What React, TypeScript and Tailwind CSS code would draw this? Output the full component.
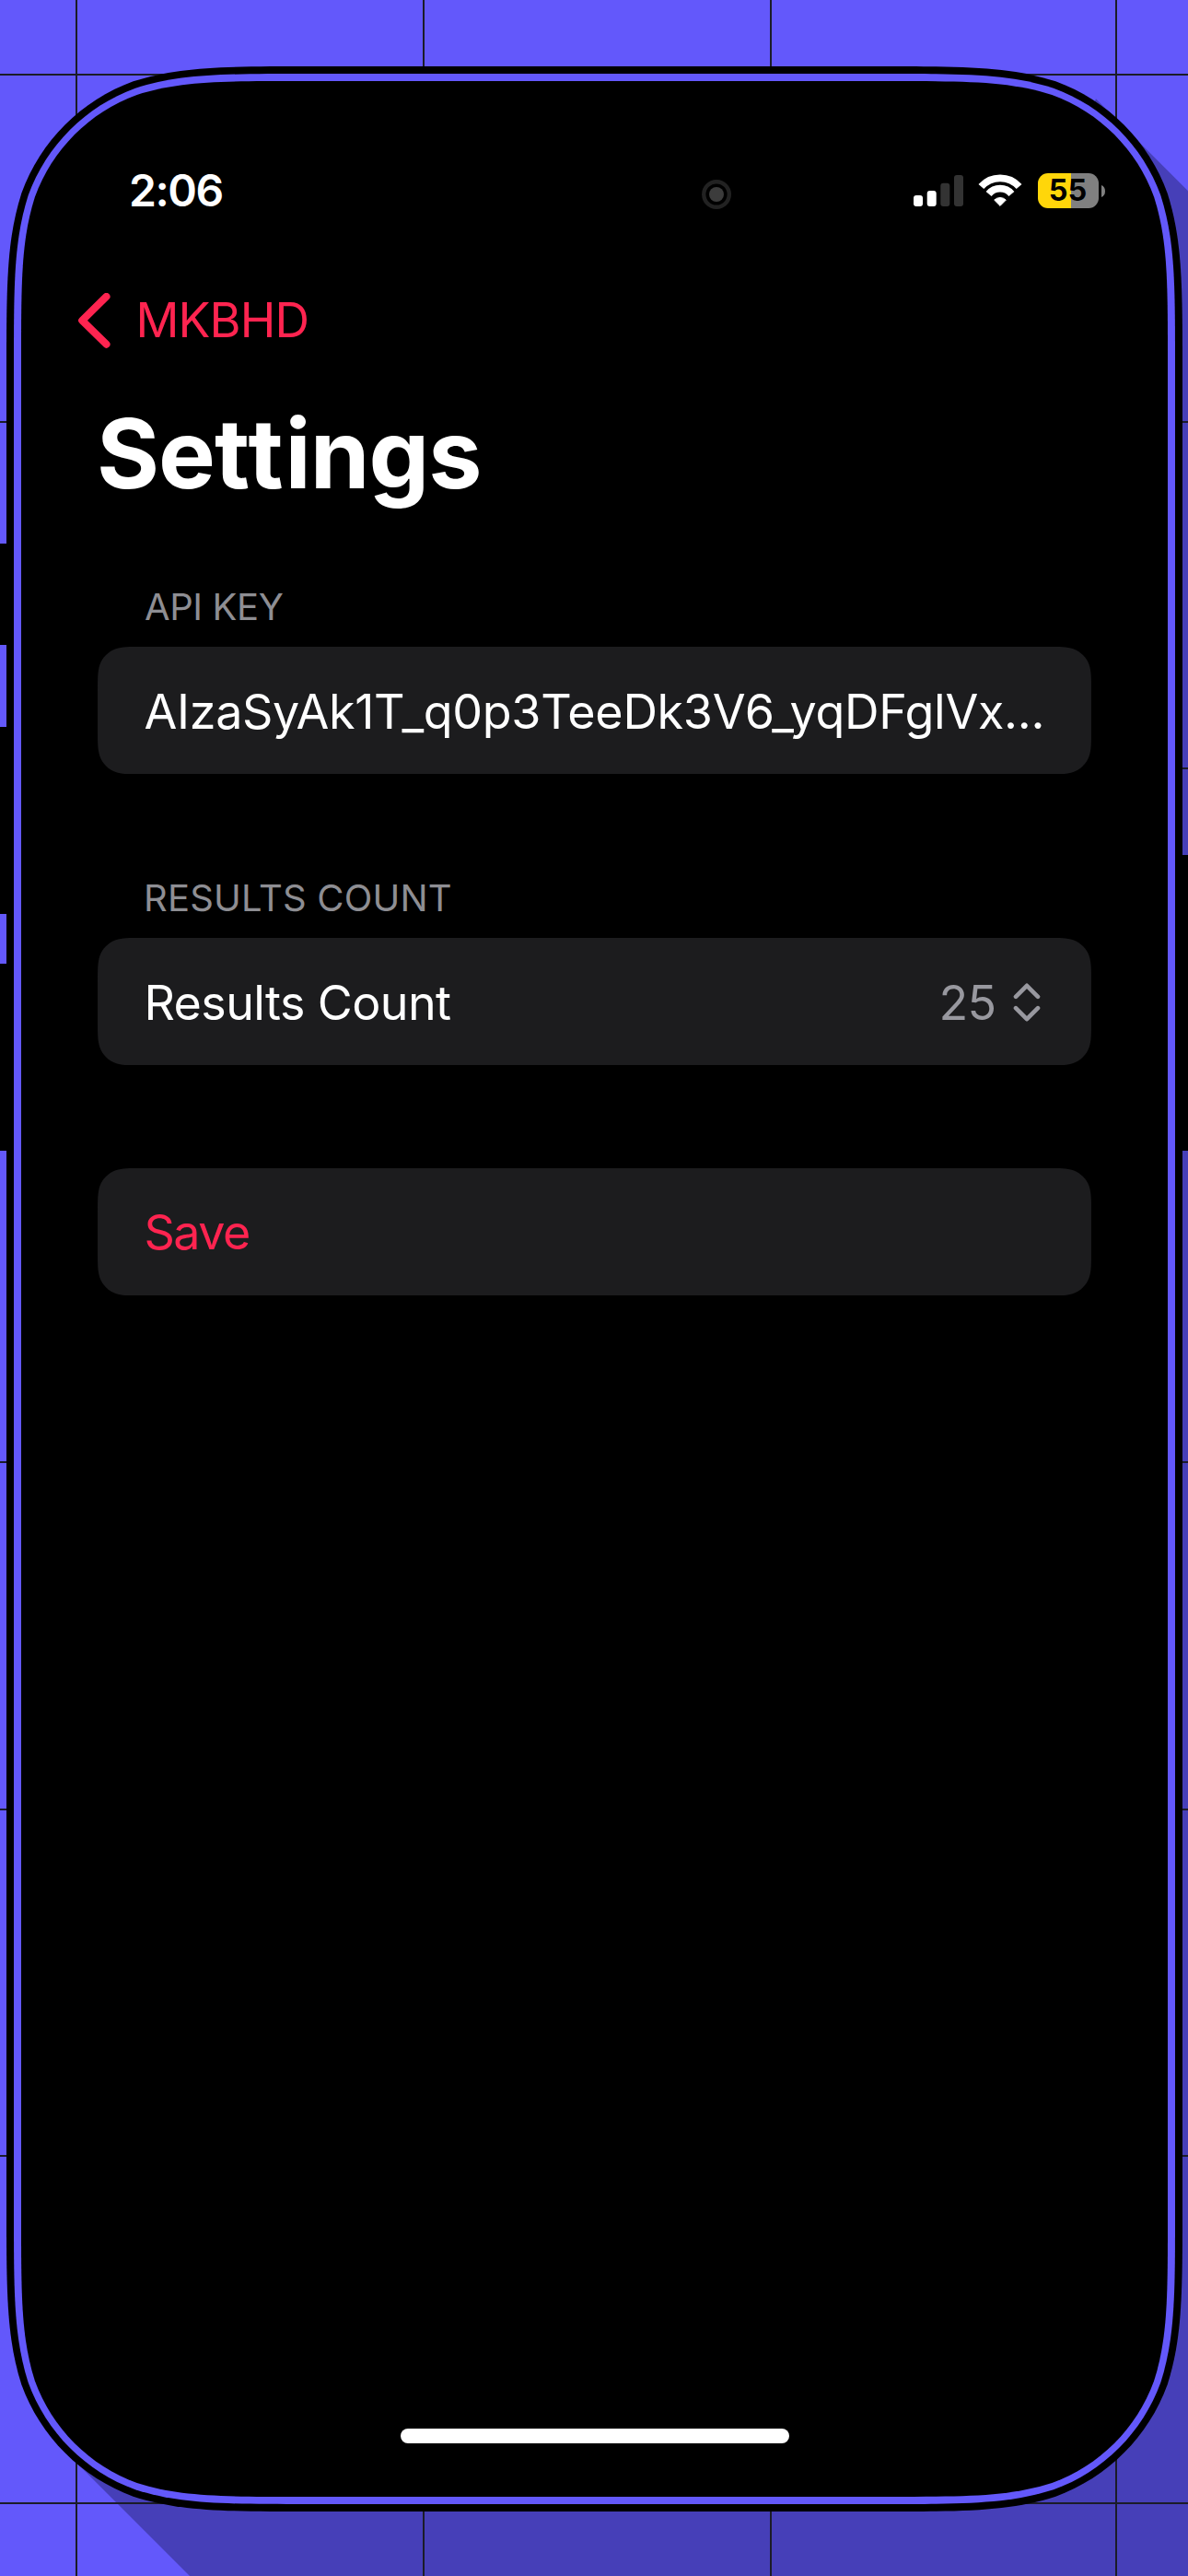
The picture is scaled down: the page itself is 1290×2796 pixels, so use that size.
import React from "react";

const PURPLE = "#6358fb";

/** One smoothed corner, as bezier points in units of the radius, from the horizontal edge to the vertical one. */
const CORNER = [
  [1.52866, 0],
  [1.08849, 0],
  [0.86841, 0],
  [0.63149, 0.07491],
  [0.37282, 0.16906],
  [0.16906, 0.37282],
  [0.07491, 0.63149],
  [0, 0.86841],
  [0, 1.08849],
  [0, 1.52866],
];

/** Path of a rounded rectangle with continuous (smoothed) corners. */
function smoothRect(x: number, y: number, w: number, h: number, r: number): string {
  const back = [...CORNER].reverse();
  const draw = (pts: number[][], map: (a: number, b: number) => [number, number]) => {
    const [start, ...rest] = pts.map(([a, b]) => map(a * r, b * r).map((n) => n.toFixed(2)).join(" "));
    return `${start} C${rest.join(" ")}`;
  };
  return [
    "M" + draw(back, (a, b) => [x + a, y + b]),
    "L" + draw(CORNER, (a, b) => [x + w - a, y + b]),
    "L" + draw(back, (a, b) => [x + w - a, y + h - b]),
    "L" + draw(CORNER, (a, b) => [x + a, y + h - b]),
    "Z",
  ].join(" ");
}

const GRID_X = [82, 459, 836, 1211];
const GRID_Y = [80, 457, 833, 1210, 1586, 1963, 2339, 2716];

function Backdrop() {
  return (
    <svg className="absolute inset-0" width="1290" height="2796" viewBox="0 0 1290 2796">
      <path d="M1190 107.3L1290 207.3V2796H206L84 2674Z" fill="#463fb8" />
      {GRID_X.map((x) => (
        <rect key={x} x={x} y="0" width="2" height="2796" fill="#1b1c28" />
      ))}
      {GRID_Y.map((y) => (
        <rect key={y} x="0" y={y} width="1290" height="2" fill="#1b1c28" />
      ))}
      <rect x="0" y="590" width="8" height="110" />
      <rect x="0" y="789" width="8" height="203" />
      <rect x="0" y="1046" width="8" height="203" />
      <rect x="1283" y="928" width="7" height="321" />
      <path d={smoothRect(7, 72, 1277, 2654, 218)} fill="#000" />
      <path d={smoothRect(15, 80, 1261, 2638, 209)} fill={PURPLE} />
      <path d={smoothRect(23, 88, 1245, 2622, 199)} fill="#000" />
    </svg>
  );
}

function Signal() {
  return (
    <svg width="54" height="38" viewBox="992 188 54 38">
      <rect x="992" y="212" width="10" height="12" rx="3" fill="#fff" />
      <rect x="1006.7" y="207" width="10" height="17" rx="3" fill="#fff" />
      <rect x="1021.3" y="198.7" width="10" height="25.3" rx="3" fill="#333" />
      <rect x="1036" y="190" width="10" height="34" rx="3" fill="#333" />
    </svg>
  );
}

function Wifi() {
  return (
    <svg width="48" height="38" viewBox="1062.5 188 48 38" fill="none" stroke="#fff">
      <path d="M1065.9 202.5A27.7 27.7 0 0 1 1107.1 202.5" strokeWidth="7.8" />
      <path d="M1074.1 210.4A16.2 16.2 0 0 1 1098.9 210.4" strokeWidth="7.8" />
      <path
        d="M1086.5 223.4L1080.2 217.1A9 9 0 0 1 1092.8 217.1Z"
        fill="#fff"
        strokeWidth="1"
        strokeLinejoin="round"
      />
    </svg>
  );
}

function Battery() {
  return (
    <div className="flex items-center gap-[3px]">
      <div className="flex h-[38px] w-[66px] items-center justify-center rounded-[11px] bg-linear-to-r from-[#ffd60a] from-[54.5%] to-[#808080] to-[54.5%]">
        <span className="text-[32.5px] leading-[38px] font-bold text-black">55</span>
      </div>
      <svg width="4" height="13" viewBox="0 0 4 13">
        <path d="M0 0Q4 1.6 4 6.5T0 13Z" fill="#808080" />
      </svg>
    </div>
  );
}

function StatusBar() {
  return (
    <div className="flex h-[88px] items-center justify-between pr-[68.5px] pl-[117px]">
      <span className="text-[48px] leading-[60px] font-semibold tracking-[-1.5px] text-white">2:06</span>
      <div className="flex items-center">
        <Signal />
        <div className="ml-[16.5px]">
          <Wifi />
        </div>
        <div className="ml-[16.5px]">
          <Battery />
        </div>
      </div>
    </div>
  );
}

function Card({ children }: { children: React.ReactNode }) {
  return (
    <div className="relative h-[138.4px] w-[1079px]">
      <svg className="absolute inset-0" width="1079" height="138.4" viewBox="0 0 1079 138.4">
        <path d={smoothRect(0, 0, 1079, 138.4, 31)} fill="#1c1c1e" />
      </svg>
      <div className="relative flex h-full items-center justify-between pt-[3.2px] pr-[55.5px] pl-[50.5px] text-[52px] leading-[64px]">
        {children}
      </div>
    </div>
  );
}

export default function App() {
  return (
    <div className="relative h-[2796px] w-[1290px] overflow-hidden bg-[#6358fb] font-['Inter','Liberation_Sans',sans-serif]">
      <Backdrop />
      <div className="relative flex h-[2796px] flex-col pt-[163px] pr-[22px] pb-[144px] pl-[23px]">
        <StatusBar />
        <svg className="absolute top-[195px] left-[762px]" width="32" height="32" viewBox="0 0 32 32">
          <circle cx="16" cy="16" r="13.8" fill="none" stroke="#222" strokeWidth="4.4" />
          <circle cx="16" cy="16" r="8" fill="#3c3c3c" />
        </svg>

        <div className="mt-[54px] flex h-[86px] items-center pl-[62px] text-[#ff2450]">
          <svg width="35" height="60" viewBox="0 0 35 60" fill="none">
            <path
              d="M30.5 3.9L4.2 29.8L30.5 55.7"
              stroke="currentColor"
              strokeWidth="8"
              strokeLinecap="round"
              strokeLinejoin="round"
            />
          </svg>
          <span className="ml-[27.5px] text-[52px] leading-[64px] tracking-[-0.9px]">MKBHD</span>
        </div>

        <main className="flex flex-col pl-[83px]">
          <h1 className="mt-[41px] -ml-px text-[104px] leading-[120px] font-bold text-white">
            <span className="tracking-[-1px]">Se</span>
            <span className="tracking-[2px]">tt</span>
            <span className="tracking-[-1px]">ings</span>
          </h1>

          <h2 className="mt-[83px] pl-[51px] text-[40px] leading-[48px] tracking-[-0.4px] text-[#8e8e93]">API KEY</h2>
          <div className="mt-[19px]">
            <Card>
              <span className="tracking-[-0.31px] whitespace-nowrap text-white">
                AIzaSyAk1T_q0p3TeeDk3V6_yqDFglVx...
              </span>
            </Card>
          </div>

          <h2 className="mt-[110.6px] pl-[50px] text-[40px] leading-[48px] tracking-[0.2px] text-[#8e8e93]">
            RESULTS COUNT
          </h2>
          <div className="mt-[19px]">
            <Card>
              <span className="tracking-[-0.6px] text-white">Results Count</span>
              <span className="flex items-center text-[#98989f]">
                <span className="tracking-[-0.7px]">25</span>
                <svg className="mb-[2px] ml-[18px]" width="30" height="42" viewBox="0 0 30 42" fill="none">
                  <path
                    d="M3 14.8L15 2.8L27 14.8M3 27.2L15 39.2L27 27.2"
                    stroke="currentColor"
                    strokeWidth="4.6"
                    strokeLinecap="round"
                    strokeLinejoin="round"
                  />
                </svg>
              </span>
            </Card>
          </div>

          <div className="mt-[111.2px]">
            <Card>
              <span className="tracking-[-1.5px] text-[#ff2450]">Save</span>
            </Card>
          </div>
        </main>

        <div className="mt-auto h-[16px] w-[422px] self-center rounded-full bg-white" />
      </div>
    </div>
  );
}
